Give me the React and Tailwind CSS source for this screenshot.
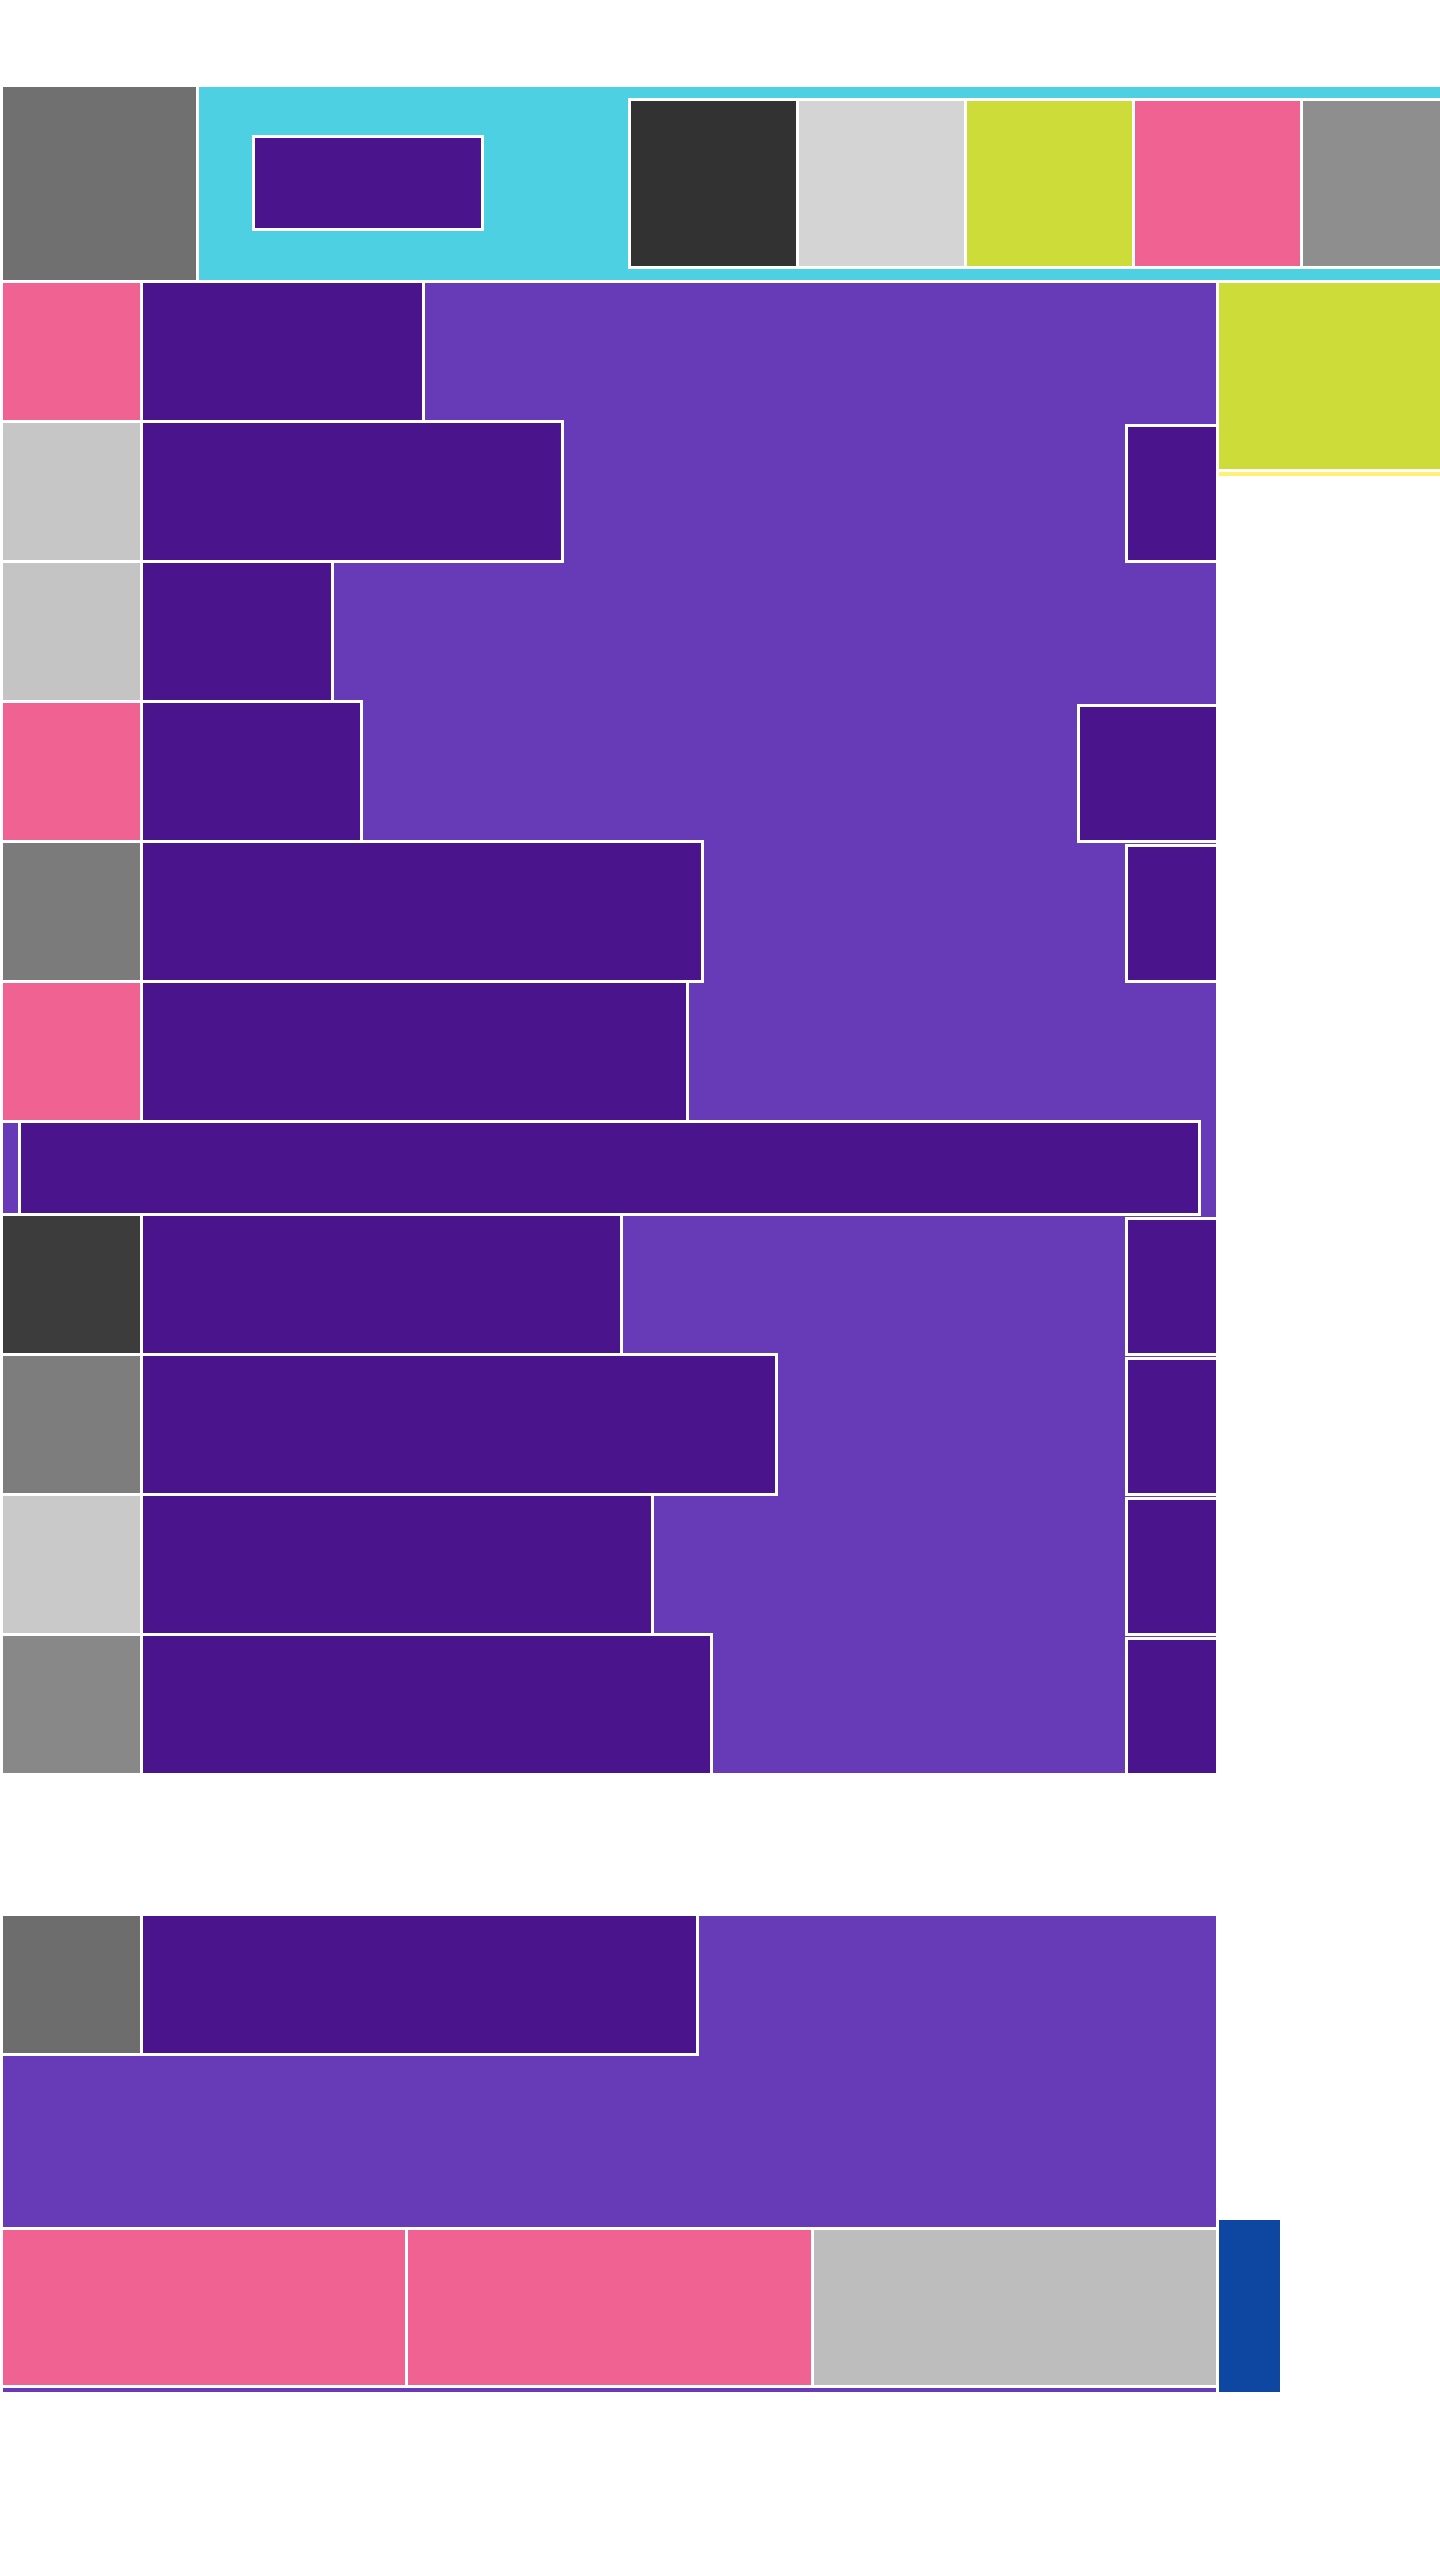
export default function App() {
  // rows of the main list: swatch colour, width of the dark bar, optional right box width
  const topRows = [
    { swatch: "bg-[#F06292]", bar: "w-[279px]", box: null },
    { swatch: "bg-[#C6C6C6]", bar: "w-[418px]", box: "w-[88px]" },
    { swatch: "bg-[#C4C4C4]", bar: "w-[188px]", box: null },
    { swatch: "bg-[#F06292]", bar: "w-[217px]", box: "w-[136px]" },
    { swatch: "bg-[#7B7B7B]", bar: "w-[558px]", box: "w-[88px]" },
    { swatch: "bg-[#F06292]", bar: "w-[543px]", box: null },
  ];

  const bottomRows = [
    { swatch: "bg-[#3C3C3C]", bar: "w-[477px]", box: "w-[88px]" },
    { swatch: "bg-[#7D7D7D]", bar: "w-[632px]", box: "w-[88px]" },
    { swatch: "bg-[#C9C9C9]", bar: "w-[508px]", box: "w-[88px]" },
    { swatch: "bg-[#888888]", bar: "w-[567px]", box: "w-[88px]" },
  ];

  const Row = ({ swatch, bar, box }) => (
    <div className="flex h-[137px] shrink-0">
      <div className={`w-[137px] h-[137px] shrink-0 outline-[3px] outline-white ${swatch}`} />
      <div className={`ml-[3px] h-[137px] shrink-0 bg-[#4A148C] outline-[3px] outline-white ${bar}`} />
      {box && (
        <div className={`ml-auto self-end h-[133px] shrink-0 bg-[#4A148C] outline-[3px] outline-white ${box}`} />
      )}
    </div>
  );

  return (
    <div className="w-[1440px] h-[2560px] bg-white overflow-hidden">

      {/* HEADER */}
      <header className="flex mt-[87px] h-[193px]">
        <div className="ml-[3px] w-[193px] shrink-0 bg-[#707070]" />
        <div className="ml-[3px] flex-1 flex items-start bg-[#4DD0E1] overflow-hidden">
          <div className="ml-[53px] mt-[48px] w-[232px] h-[96px] shrink-0 border-[3px] border-white bg-[#4A148C]" />
          <div className="ml-[144px] mt-[11px] flex gap-[3px] shrink-0 bg-white p-[3px]">
            <div className="w-[165px] h-[165px] shrink-0 bg-[#323232]" />
            <div className="w-[165px] h-[165px] shrink-0 bg-[#D4D4D4]" />
            <div className="w-[165px] h-[165px] shrink-0 bg-[#CDDC39]" />
            <div className="w-[165px] h-[165px] shrink-0 bg-[#F06292]" />
            <div className="w-[165px] h-[165px] shrink-0 bg-[#8E8E8E]" />
          </div>
        </div>
      </header>

      {/* MAIN LIST */}
      <section className="flex items-start mt-[3px]">
        <div className="ml-[3px] w-[1213px] h-[1490px] shrink-0 flex flex-col gap-[3px] bg-[#673AB7]">
          {topRows.map((r, i) => (
            <Row key={i} {...r} />
          ))}

          <div className="flex h-[90px] shrink-0">
            <div className="ml-[18px] w-[1177px] h-[90px] bg-[#4A148C] outline-[3px] outline-white" />
          </div>

          {bottomRows.map((r, i) => (
            <Row key={i} {...r} />
          ))}
        </div>

        <div className="ml-[3px] flex-1 flex flex-col">
          <div className="h-[186px] bg-[#CDDC39]" />
          <div className="mt-[3px] h-[4px] bg-[#FFF176]" />
        </div>
      </section>

      {/* LOWER BLOCK */}
      <section className="flex items-end mt-[143px]">
        <div className="ml-[3px] w-[1213px] h-[476px] shrink-0 flex flex-col bg-[#673AB7]">
          <div className="flex h-[137px] shrink-0">
            <div className="w-[137px] h-[137px] shrink-0 bg-[#6D6D6D] outline-[3px] outline-white" />
            <div className="ml-[3px] w-[553px] h-[137px] shrink-0 bg-[#4A148C] outline-[3px] outline-white" />
          </div>

          <div className="mt-[177px] grid grid-cols-3 gap-[3px] h-[155px] shrink-0">
            <div className="bg-[#F06292] outline-[3px] outline-white" />
            <div className="bg-[#F06292] outline-[3px] outline-white" />
            <div className="bg-[#BDBDBD] outline-[3px] outline-white" />
          </div>
        </div>

        <div className="ml-[3px] w-[61px] h-[172px] shrink-0 bg-[#0D47A1]" />
      </section>

    </div>
  );
}
